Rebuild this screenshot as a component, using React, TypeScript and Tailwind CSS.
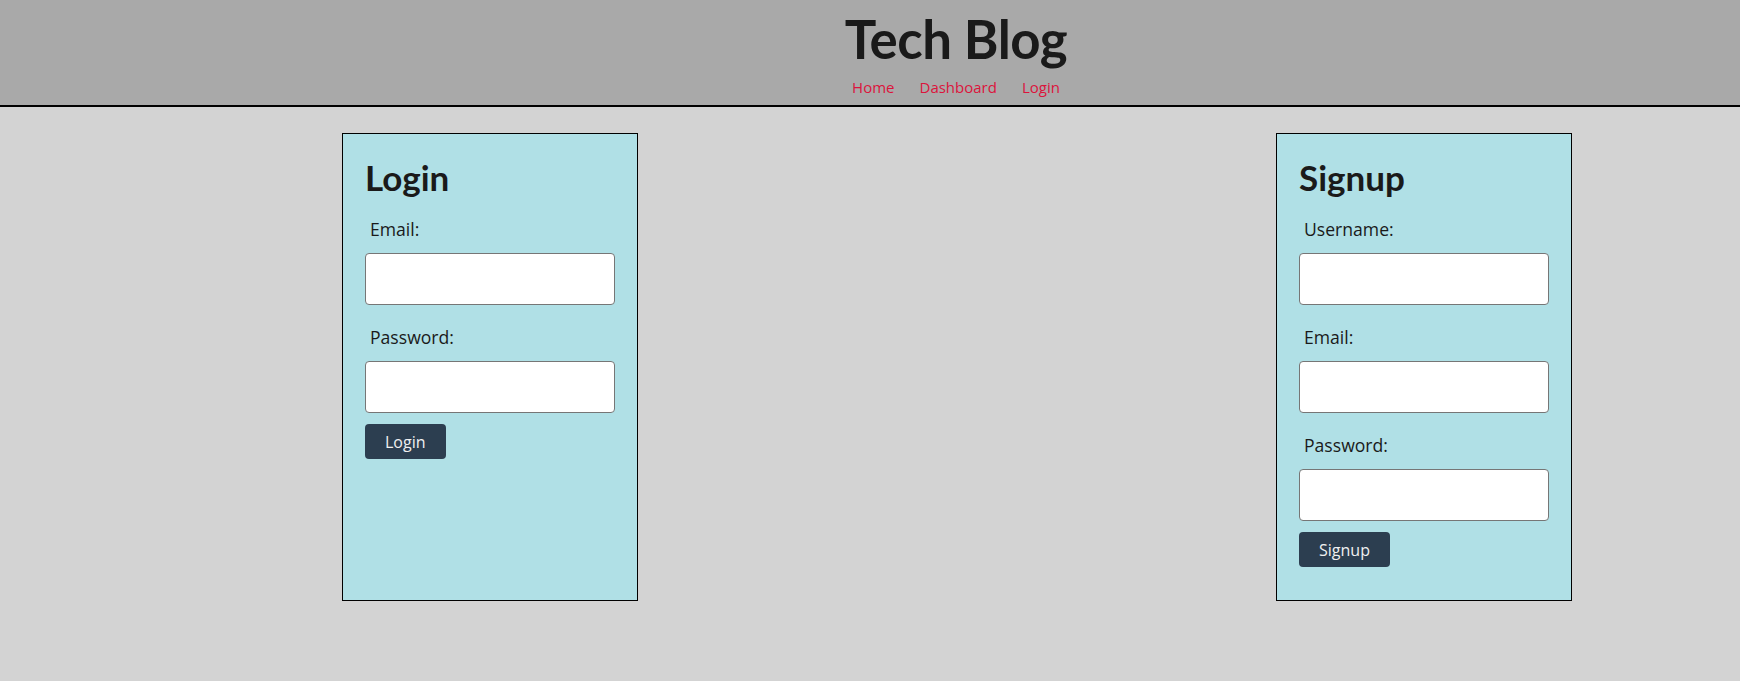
import { useState } from "react"

const font = { fontFamily: '"Open Sans", "Noto Sans", Arial, sans-serif' }
const heading = { fontFamily: 'Lato, "Open Sans", Arial, sans-serif' }

function Field({ label, type }: { label: string; type: string }) {
    const [value, setValue] = useState("")
    return (
        <div className="flex flex-col">
            <label className="block pl-[5px] text-[17.6px] leading-[24px] text-[#1a1a1a]">{label}</label>
            <input
                type={type}
                value={value}
                onChange={(e) => setValue(e.target.value)}
                className="mt-[12px] mb-[20px] h-[52px] w-full rounded-[4px] border border-[#767676] bg-white px-2 outline-none"
            />
        </div>
    )
}

function Card({ title, fields, button }: { title: string; fields: { label: string; type: string }[]; button: string }) {
    return (
        <div className="w-[296px] border border-black bg-[#b0e0e6] px-[22px] pt-[23px] pb-[33px]">
            <h2 style={heading} className="text-[35px] leading-[40px] font-bold text-[#1a1a1a]">{title}</h2>
            <form className="mt-[20px] flex flex-col" onSubmit={(e) => e.preventDefault()}>
                {fields.map((f) => (
                    <Field key={f.label} label={f.label} type={f.type} />
                ))}
                <button type="submit" className="-mt-[9px] h-[35px] self-start rounded-[4px] bg-[#2c3e50] px-[20px] text-[16px] text-[#f0f0f0]">
                    {button}
                </button>
            </form>
        </div>
    )
}

export default function App() {
    return (
        <div style={font} className="min-h-[681px] bg-[#d3d3d3]">
            <header className="flex h-[107px] flex-col items-center border-b-2 border-black bg-[#a9a9a9] pt-[9px] pl-[172px]">
                <h1 style={heading} className="text-[52.8px] leading-[60px] font-bold tracking-[-0.5px] text-[#1a1a1a]">Tech Blog</h1>
                <nav className="mt-[6px] flex gap-[25px] text-[15px] leading-[24px] text-[#dc143c]">
                    <a href="#">Home</a>
                    <a href="#">Dashboard</a>
                    <a href="#">Login</a>
                </nav>
            </header>
            <main className="flex justify-between pt-[26px] pl-[342px] pr-[168px]">
                <Card
                    title="Login"
                    fields={[
                        { label: "Email:", type: "email" },
                        { label: "Password:", type: "password" },
                    ]}
                    button="Login"
                />
                <Card
                    title="Signup"
                    fields={[
                        { label: "Username:", type: "text" },
                        { label: "Email:", type: "email" },
                        { label: "Password:", type: "password" },
                    ]}
                    button="Signup"
                />
            </main>
        </div>
    )
}
